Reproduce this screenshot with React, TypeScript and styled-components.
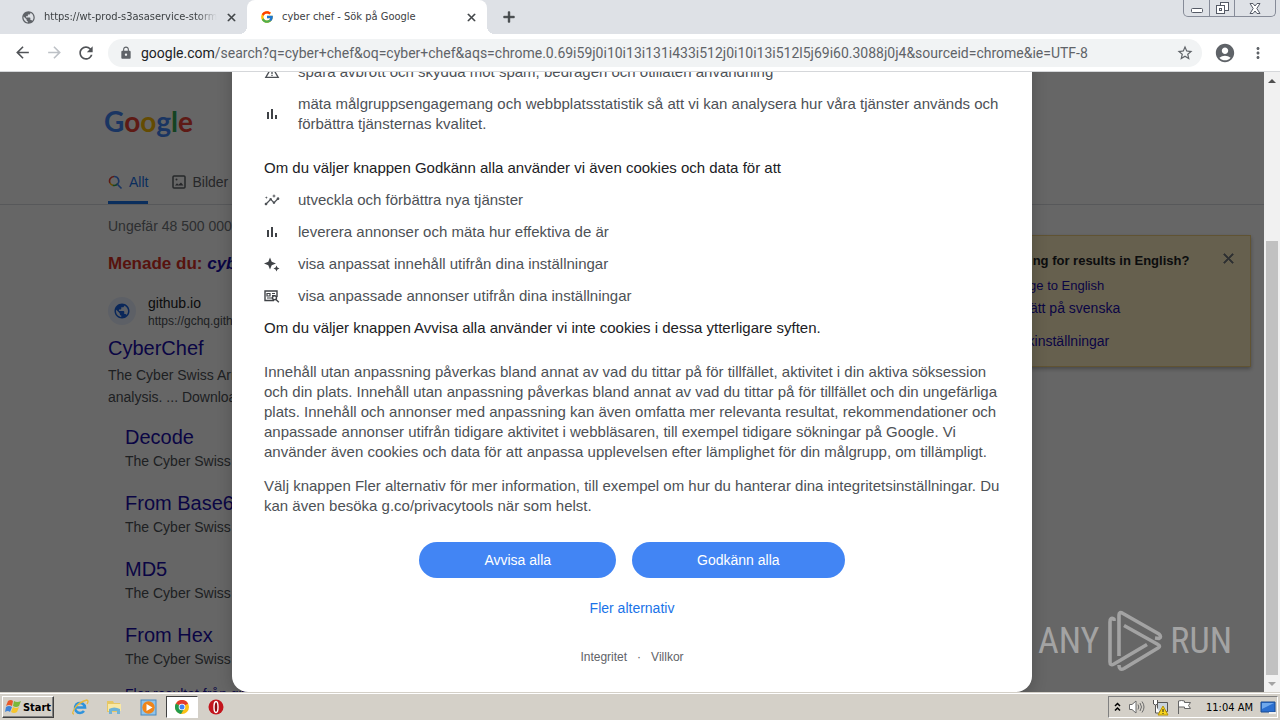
import React from 'react';
import styled, { createGlobalStyle, css } from 'styled-components';
import { FcGoogle } from 'react-icons/fc';
import { MdArrowBack, MdArrowForward, MdRefresh, MdLock, MdStarBorder, MdAccountCircle, MdMoreVert, MdPublic, MdClose, MdAdd, MdWarningAmber, MdInsights } from 'react-icons/md';

const arial = '"Liberation Sans", Arial, sans-serif';
const tahoma = '"DejaVu Sans Condensed", Tahoma, sans-serif';

const Global = createGlobalStyle`
  * { box-sizing: border-box; }
  body { margin: 0; background: #fff; font-family: ${arial}; font-size: 14px; }
  button { font: inherit; border: 0; padding: 0; background: none; color: inherit; display: inline-flex; align-items: center; justify-content: center; }
  a { text-decoration: none; }
  svg { display: block; flex: none; }
`;

const boldIcon = css`
  path:not([fill='none']) { stroke: currentColor; stroke-width: 1; }
`;

const Shell = styled.div`
  display: flex;
  flex-direction: column;
  height: 100vh;
  overflow: hidden;
`;

/* Browser chrome */
const TabStrip = styled.header`
  display: flex;
  height: 34px;
  background: #dee1e6;
  font-family: ${tahoma};
  font-size: 11px;
  color: #3c4043;
`;

const Tab = styled.div<{ $active?: boolean }>`
  position: relative;
  display: flex;
  align-items: center;
  width: ${p => (p.$active ? 240 : 247)}px;
  padding: 0 9px 0 ${p => (p.$active ? 13 : 21)}px;
  gap: 8px;
  ${p => p.$active && css`
    background: #fff;
    border-radius: 8px 8px 0 0;
    &::before, &::after {
      content: '';
      position: absolute;
      bottom: 0;
      width: 8px;
      height: 8px;
    }
    &::before { right: 100%; background: radial-gradient(circle at 0 0, transparent 8px, #fff 8px); }
    &::after { left: 100%; background: radial-gradient(circle at 100% 0, transparent 8px, #fff 8px); }
  `}
`;

const TabTitle = styled.span<{ $fade?: boolean }>`
  flex: 1;
  min-width: 0;
  overflow: hidden;
  white-space: nowrap;
  line-height: 18px;
  ${p => p.$fade && css`mask-image: linear-gradient(to right, #000 88%, transparent);`}
`;

const TabClose = styled.button`
  ${boldIcon}
`;

const NewTab = styled.button`
  width: 44px;
  ${boldIcon}
`;

const WindowButtons = styled.div`
  display: flex;
  margin: 0 4px 0 auto;
  height: 17px;
  border: 1px solid #868b98;
  border-top: 0;
  border-radius: 0 0 5px 5px;
  button + button { border-left: 1px solid #868b98; }
`;

const WindowButton = styled.button<{ $wide?: boolean }>`
  width: ${p => (p.$wide ? 41 : 25)}px;
`;

const Toolbar = styled.div`
  display: flex;
  align-items: center;
  height: 38px;
  padding: 0 12px;
  background: #fff;
  border-bottom: 1px solid #d5d7da;
  color: #5f6368;
`;

const NavButton = styled.button<{ $muted?: boolean }>`
  width: 20px;
  height: 28px;
  margin-right: 12px;
  color: ${p => (p.$muted ? '#bdc1c6' : '#505357')};
`;

const MenuButton = styled.button`
  width: 20px;
  height: 28px;
  margin-left: 12px;
`;

const Omnibox = styled.form`
  display: flex;
  flex: 1;
  min-width: 0;
  align-items: center;
  height: 28px;
  margin-right: 12px;
  padding: 0 8px 0 11px;
  gap: 8px;
  border-radius: 14px;
  background: #f1f3f4;
`;

const Url = styled.div`
  flex: 1;
  min-width: 0;
  overflow: hidden;
  white-space: nowrap;
  font-family: Roboto, ${tahoma};
  font-size: 14px;
  line-height: 20px;
  b { font-weight: 400; color: #202124; }
`;

/* Page area */
const Viewport = styled.main`
  display: flex;
  flex: 1;
  min-height: 0;
`;

const Stage = styled.div`
  position: relative;
  flex: 1;
  min-width: 0;
  overflow: hidden;
`;

const Page = styled.div`
  color: #4d5156;
`;

const PageHeader = styled.div`
  display: flex;
  flex-direction: column;
  height: 133px;
  padding: 28px 0 0 108px;
  border-bottom: 1px solid #dadce0;
`;

const Logo = styled.a`
  margin-left: -4px;
  font-family: Lato, sans-serif;
  font-size: 28px;
  font-weight: 700;
  line-height: 42px;
`;

const Tint = styled.span<{ $c: string }>`
  color: ${p => p.$c};
`;

const PageNav = styled.nav`
  display: flex;
  gap: 24px;
  margin-top: auto;
`;

const PageTab = styled.a<{ $active?: boolean }>`
  display: flex;
  gap: 6px;
  height: 35px;
  padding-bottom: 6px;
  align-items: center;
  border-bottom: 3px solid ${p => (p.$active ? '#1a73e8' : 'transparent')};
  color: ${p => (p.$active ? '#1a73e8' : '#5f6368')};
`;

const Columns = styled.div`
  display: flex;
  justify-content: space-between;
  padding: 0 13px 0 108px;
`;

const Results = styled.div`
  width: 600px;
`;

const Stats = styled.p`
  margin: 0;
  padding-top: 10px;
  line-height: 22px;
  color: #70757a;
`;

const Suggestion = styled.p`
  margin: 16px 0 18px;
  font-size: 17px;
  line-height: 22px;
  font-weight: 700;
  color: #d93025;
  a { color: #1a0dab; font-style: italic; }
`;

const Source = styled.div`
  display: flex;
  align-items: center;
  gap: 12px;
  height: 36px;
`;

const SourceIcon = styled.span`
  display: flex;
  align-items: center;
  justify-content: center;
  width: 28px;
  height: 28px;
  border-radius: 50%;
  background: #e8f0fe;
  color: #1a63e0;
`;

const SourceText = styled.div`
  color: #202124;
  line-height: 20px;
  small { display: block; font-size: 12px; line-height: 16px; color: #4d5156; }
`;

const Title = styled.h3`
  margin: 0;
  font-size: 20px;
  line-height: 26px;
  font-weight: 400;
  a { color: #1a0dab; }
`;

const Snippet = styled.p`
  margin: 0;
  line-height: 22px;
  white-space: nowrap;
`;

const Main = styled.article`
  ${Title} { margin: 6px 0 3px; }
`;

const SubLinks = styled.div`
  padding: 16px 0 0 17px;
`;

const SubLink = styled.div`
  height: 66px;
`;

const More = styled.a`
  display: block;
  color: #1a0dab;
  line-height: 12px;
`;

const Notice = styled.aside`
  position: relative;
  width: 270px;
  height: 132px;
  margin-top: 30px;
  padding: 15px 16px;
  border: 1px solid #f0d080;
  background: #fff0c4;
  box-shadow: 0 2px 4px rgba(0, 0, 0, 0.3);
  color: #202124;
  font-size: 14px;
  strong { display: block; font-size: 13px; line-height: 20px; margin-bottom: 3px; }
  a { display: block; line-height: 23px; color: #1a0dab; white-space: nowrap; }
  a:first-of-type { font-size: 13px; }
  a:last-of-type { margin-top: 10px; }
`;

const Dismiss = styled.button`
  position: absolute;
  top: 14px;
  right: 13px;
  color: #70757a;
  ${boldIcon}
`;

/* Consent dialog */
const Scrim = styled.div`
  position: absolute;
  inset: 0;
  display: flex;
  justify-content: center;
  align-items: flex-end;
  background: rgba(0, 0, 0, 0.6);
`;

const Dialog = styled.section`
  width: 800px;
  max-width: 100%;
  padding: 32px 32px 27px;
  border-radius: 16px;
  background: #fff;
  box-shadow: 0 4px 16px rgba(0, 0, 0, 0.2);
  color: #4d5156;
  font-size: 15px;
  line-height: 20px;
`;

const Lead = styled.p<{ $section?: boolean }>`
  margin: ${p => (p.$section ? 12 : 0)}px 0 0;
  color: #202124;
`;

const Purposes = styled.ul`
  display: flex;
  flex-direction: column;
  gap: 12px;
  margin: 0;
  padding: 12px 0;
  list-style: none;
`;

const Purpose = styled.li`
  display: flex;
  align-items: center;
  gap: 18px;
  color: #4d5156;
`;

const Paragraph = styled.p<{ $first?: boolean }>`
  margin: ${p => (p.$first ? 24 : 14)}px -8px 0 0;
`;

const Actions = styled.div`
  display: flex;
  justify-content: center;
  gap: 16px;
  margin: 26px 0 20px;
`;

const Choice = styled.button`
  height: 36px;
  padding: 0 65px;
  border-radius: 18px;
  background: #4285f4;
  color: #fff;
  font-size: 14px;
`;

const Centered = styled.div`
  display: flex;
  justify-content: center;
  font-size: 14px;
  a { color: #1a73e8; }
`;

const Legal = styled.footer`
  display: flex;
  justify-content: center;
  gap: 10px;
  margin-top: 31px;
  font-size: 12px;
  line-height: 16px;
  color: #5f6368;
  a { color: inherit; }
`;

const Watermark = styled.div`
  position: absolute;
  right: 32px;
  bottom: 20px;
  display: flex;
  align-items: center;
  gap: 7px;
  font-family: "Liberation Sans Narrow", "Roboto Condensed", Roboto, sans-serif;
  font-size: 36px;
  line-height: 62px;
  color: #a3a3a3;
`;

/* Scrollbar */
const ScrollBar = styled.div`
  display: flex;
  flex-direction: column;
  width: 16px;
  background: #f1f1f1;
`;

const ScrollArrow = styled.button`
  height: 17px;
`;

const Track = styled.div`
  display: flex;
  flex: 1;
  flex-direction: column;
  justify-content: flex-end;
  padding: 0 2px;
`;

const Thumb = styled.div`
  height: 74%;
  background: #c1c1c1;
`;

/* Taskbar */
const TaskBar = styled.footer`
  display: flex;
  align-items: center;
  height: 28px;
  padding: 0 2px;
  border-top: 1px solid #d4d0c8;
  box-shadow: inset 0 1px #fff;
  background: #d4d0c8;
  font-family: ${tahoma};
  font-size: 11px;
  color: #000;
`;

const StartButton = styled.button`
  width: 52px;
  height: 22px;
  margin: 1px 10px 0 0;
  gap: 1px;
  border: 1px solid;
  border-color: #fff #404040 #404040 #fff;
  box-shadow: inset -1px -1px #808080;
  font-weight: 700;
`;

const TaskButton = styled.button<{ $pressed?: boolean }>`
  width: 32px;
  height: 22px;
  margin: 1px 2px 0 0;
  ${p => p.$pressed && css`
    background: #fff;
    border: 1px solid;
    border-color: #404040 #fff #fff #404040;
  `}
`;

const Tray = styled.div`
  display: flex;
  align-items: center;
  height: 22px;
  margin: 1px 0 0 auto;
  padding: 0 1px 0 5px;
  gap: 7px;
  border: 1px solid;
  border-color: #808080 #fff #fff #808080;
`;

const Clock = styled.time`
  margin: 0 0 0 6px;
`;

const BarsIcon = () => (
  <svg width="16" height="16" viewBox="0 0 16 16" fill="#3f4246">
    <path d="M3 6h2v7H3zM7 3h2v10H7zM11 9h2v4h-2z" />
  </svg>
);

const SparkIcon = () => (
  <svg width="16" height="16" viewBox="0 0 16 16" fill="#3f4246">
    <path d="M6 1.500 7.700 5.800 12 7.500 7.700 9.200 6 13.500 4.300 9.200 0 7.500 4.300 5.800zM12.500 9.500l.9 2.100 2.100.9-2.100.9-.9 2.100-.9-2.100-2.100-.9 2.100-.9z" />
  </svg>
);

const AdIcon = () => (
  <svg width="16" height="16" viewBox="0 0 16 16" fill="none" stroke="#3f4246" strokeWidth="1.400">
    <path d="M10 12.500H1V3h12v6" />
    <path d="M3 5.500h3v2.500H3zM8 5.500h3M8 7.500h3M3 10h5" strokeWidth="1.200" />
    <circle cx="10.500" cy="9.800" r="2" />
    <path d="m12 11.500 2.800 2.800" />
  </svg>
);

const SearchIcon = () => (
  <svg width="15" height="15" viewBox="0 0 15 15" fill="none" strokeWidth="1.600">
    <path d="M6 1.500A4.500 4.500 0 0 0 2 8" stroke="#ea4335" />
    <path d="M2 8a4.500 4.500 0 0 0 3 2.400" stroke="#fbbc04" />
    <path d="M5 10.400A4.500 4.500 0 0 0 9.800 8.500" stroke="#34a853" />
    <path d="M6 1.500A4.500 4.500 0 0 1 9.400 9.200L13.500 13.500" stroke="#4285f4" />
  </svg>
);

const ImageIcon = () => (
  <svg width="14" height="14" viewBox="0 0 14 14" fill="none" stroke="#5f6368" strokeWidth="1.500">
    <rect x="1" y="1" width="12" height="12" rx="1" />
    <path d="m3 10.500 2-2.300 1.500 1.500L9 7.500l2.500 3z" fill="#5f6368" stroke="none" />
    <circle cx="4.500" cy="4.500" r="1" fill="#5f6368" stroke="none" />
  </svg>
);

const PlayMark = () => (
  <svg width="57" height="62" viewBox="0 0 57 62" fill="none" stroke="#a3a3a3" strokeWidth="3.600" strokeLinejoin="round">
    <path d="M8 11V9Q4 7 4 12V52Q4 56 8 54L41 34.500" />
    <path d="M13 46V5Q13 1 17 3.500L53 24Q56 27 53 28.500L49 28" />
    <path d="M18 15.500L52 34.500Q55 36 52 38L18 58.500Q13 61 13 55" />
  </svg>
);

const WindowsFlag = () => (
  <svg width="17" height="16" viewBox="0 0 17 16">
    <path d="M3 2q3-2 5 0L7 7Q4 5 1 7z" fill="#e8592a" />
    <path d="M9 2q3 2 7 0l-2 5q-3 2-6 0z" fill="#7ab83a" />
    <path d="M1 8q3-2 6 0l-2 5Q3 11 0 13z" fill="#3f83d8" />
    <path d="M8 8q3 2 6 0l-2 5q-3 2-6 0z" fill="#f6c52c" />
  </svg>
);

const ExplorerE = () => (
  <svg width="18" height="18" viewBox="0 0 18 18" fill="none">
    <path d="M4.500 9.500h9.500A5 5 0 1 0 13 13" stroke="#2f93dc" strokeWidth="2.600" />
    <path d="M3 16Q0 16 4 10T16 2q2 1 0 4" stroke="#e7b93c" strokeWidth="1.300" />
  </svg>
);

const FolderIcon = () => (
  <svg width="18" height="18" viewBox="0 0 18 18">
    <path d="M2 3h6l1 2h6v9H2z" fill="#e6c765" />
    <path d="M3 6h13v7H3z" fill="#f9e8a4" />
    <path d="M4 16v-5q5-3 11 0v5h-3v-3H7v3z" fill="#6fb3d6" />
  </svg>
);

const MediaIcon = () => (
  <svg width="17" height="17" viewBox="0 0 17 17">
    <rect x="1" y="1" width="15" height="15" fill="#8fc3ea" stroke="#4988bd" />
    <circle cx="8.500" cy="8.500" r="6.200" fill="#f08519" />
    <path d="m6.500 5 6 3.500-6 3.500z" fill="#fff" />
  </svg>
);

const ChromeIcon = () => (
  <svg width="14" height="14" viewBox="0 0 14 14">
    <circle cx="7" cy="7" r="7" fill="#fbc116" />
    <path d="M7 7 .9 3.500A7 7 0 0 1 13.100 3.500z" fill="#e33b2e" />
    <path d="M7 7 .9 3.500A7 7 0 0 0 6 14l3-5z" fill="#229b4d" />
    <circle cx="7" cy="7" r="3.300" fill="#fff" />
    <circle cx="7" cy="7" r="2.500" fill="#4384f3" />
  </svg>
);

const OperaIcon = () => (
  <svg width="16" height="16" viewBox="0 0 16 16">
    <circle cx="8" cy="8" r="7.500" fill="#c3141c" />
    <ellipse cx="8" cy="8" rx="2" ry="5.500" fill="#8c0a10" stroke="#fff" strokeWidth="1.400" />
  </svg>
);

const SpeakerIcon = () => (
  <svg width="17" height="16" viewBox="0 0 17 16" fill="none" stroke="#6b6b6b">
    <path d="M1.500 5.500H4L8 2v12l-4-3.500H1.500z" fill="#fff" />
    <path d="M10 5.500q1.500 2.500 0 5M12 4q3 4 0 8M14 2.500q4 5.500 0 11" />
  </svg>
);

const NetworkIcon = () => (
  <svg width="17" height="17" viewBox="0 0 17 17" fill="none" stroke="#555">
    <path d="M5.500 3.500h10v9h-10z" fill="#c9d3dc" />
    <path d="M1.500 1v4q2 2 4 0V1M3.500 6v8H8" fill="#fff" />
    <path d="m11 7 5 9H6z" fill="#f8d51d" stroke="#b69205" />
    <path d="M11 10v3M11 14v1" stroke="#222" />
  </svg>
);

const FlagIcon = () => (
  <svg width="17" height="16" viewBox="0 0 17 16" fill="#fff" stroke="#666">
    <path d="M2.500 15V2q3-1 6 0v1.500h6l-2 3 2 3h-6V8h-6" />
  </svg>
);

const DesktopIcon = () => (
  <svg width="16" height="15" viewBox="0 0 16 15">
    <path d="M1 2h14v10H1z" fill="#2b6fd0" stroke="#194a91" />
    <path d="M2 3h12L2 9z" fill="#6fa8ec" />
    <path d="M9 13h7" stroke="#eee" strokeWidth="2" />
  </svg>
);

const subLinks = ['Decode', 'From Base64', 'MD5', 'From Hex'];

export default function App() {
  return (
    <Shell>
      <Global />
      <TabStrip>
        <Tab>
          <MdPublic size={15} color="#5f6368" />
          <TabTitle $fade>https://wt-prod-s3asaservice-storm</TabTitle>
          <TabClose aria-label="Stäng flik"><MdClose size={13} /></TabClose>
        </Tab>
        <Tab $active>
          <FcGoogle size={14} />
          <TabTitle>cyber chef - Sök på Google</TabTitle>
          <TabClose aria-label="Stäng flik"><MdClose size={13} /></TabClose>
        </Tab>
        <NewTab aria-label="Ny flik"><MdAdd size={18} /></NewTab>
        <WindowButtons>
          <WindowButton aria-label="Minimera">
            <svg width="12" height="14" viewBox="0 0 12 14"><rect x=".5" y="7.500" width="11" height="4" rx="1" fill="#fff" stroke="#555a66" /></svg>
          </WindowButton>
          <WindowButton aria-label="Återställ">
            <svg width="13" height="13" viewBox="0 0 13 13" fill="#fff" stroke="#555a66">
              <rect x="4.500" y=".5" width="8" height="8" />
              <rect x=".5" y="3.500" width="8" height="8" />
              <rect x="3.500" y="6.500" width="2" height="2" />
            </svg>
          </WindowButton>
          <WindowButton $wide aria-label="Stäng">
            <svg width="12" height="11" viewBox="0 0 12 11" fill="#fff" stroke="#555a66">
              <path d="M1 .5h3l2 2.500 2-2.500h3L7.800 5.500 11 10.500H8L6 8l-2 2.500H1l3.200-5z" />
            </svg>
          </WindowButton>
        </WindowButtons>
      </TabStrip>
      <Toolbar>
        <NavButton aria-label="Tillbaka"><MdArrowBack size={19} /></NavButton>
        <NavButton aria-label="Framåt" $muted><MdArrowForward size={19} /></NavButton>
        <NavButton aria-label="Läs in igen"><MdRefresh size={20} /></NavButton>
        <Omnibox>
          <MdLock size={14} />
          <Url><b>google.com</b>/search?q=cyber+chef&amp;oq=cyber+chef&amp;aqs=chrome.0.69i59j0i10i13i131i433i512j0i10i13i512l5j69i60.3088j0j4&amp;sourceid=chrome&amp;ie=UTF-8</Url>
          <MdStarBorder size={18} />
        </Omnibox>
        <MdAccountCircle size={22} />
        <MenuButton aria-label="Meny"><MdMoreVert size={18} /></MenuButton>
      </Toolbar>
      <Viewport>
        <Stage>
          <Page>
            <PageHeader>
              <Logo href="#"><Tint $c="#4285f4">G</Tint><Tint $c="#ea4335">o</Tint><Tint $c="#fbbc05">o</Tint><Tint $c="#4285f4">g</Tint><Tint $c="#34a853">l</Tint><Tint $c="#ea4335">e</Tint></Logo>
              <PageNav>
                <PageTab href="#" $active><SearchIcon />Allt</PageTab>
                <PageTab href="#"><ImageIcon />Bilder</PageTab>
              </PageNav>
            </PageHeader>
            <Columns>
              <Results>
                <Stats>Ungefär 48 500 000</Stats>
                <Suggestion>Menade du: <a href="#">cyber</a></Suggestion>
                <Main>
                  <Source>
                    <SourceIcon><MdPublic size={18} /></SourceIcon>
                    <SourceText>github.io<small>https://gchq.github.io</small></SourceText>
                  </Source>
                  <Title><a href="#">CyberChef</a></Title>
                  <Snippet>The Cyber Swiss Army<br />analysis. ... Download</Snippet>
                </Main>
                <SubLinks>
                  {subLinks.map(name => (
                    <SubLink key={name}>
                      <Title><a href="#">{name}</a></Title>
                      <Snippet>The Cyber Swiss</Snippet>
                    </SubLink>
                  ))}
                  <More href="#">Fler resultat från github.io</More>
                </SubLinks>
              </Results>
              <Notice>
                <strong>Looking for results in English?</strong>
                <a href="#">Change to English</a>
                <a href="#">Fortsätt på svenska</a>
                <a href="#">Språkinställningar</a>
                <Dismiss aria-label="Stäng"><MdClose size={17} /></Dismiss>
              </Notice>
            </Columns>
          </Page>
          <Scrim>
            <Dialog role="dialog" aria-label="Innan du fortsätter">
              <Purposes>
                <Purpose><MdWarningAmber size={16} />spåra avbrott och skydda mot spam, bedrägeri och otillåten användning</Purpose>
                <Purpose><BarsIcon /><span>mäta målgruppsengagemang och webbplatsstatistik så att vi kan analysera hur våra tjänster används och förbättra tjänsternas kvalitet.</span></Purpose>
              </Purposes>
              <Lead $section>Om du väljer knappen Godkänn alla använder vi även cookies och data för att</Lead>
              <Purposes>
                <Purpose><MdInsights size={16} />utveckla och förbättra nya tjänster</Purpose>
                <Purpose><BarsIcon />leverera annonser och mäta hur effektiva de är</Purpose>
                <Purpose><SparkIcon />visa anpassat innehåll utifrån dina inställningar</Purpose>
                <Purpose><AdIcon />visa anpassade annonser utifrån dina inställningar</Purpose>
              </Purposes>
              <Lead>Om du väljer knappen Avvisa alla använder vi inte cookies i dessa ytterligare syften.</Lead>
              <Paragraph $first>Innehåll utan anpassning påverkas bland annat av vad du tittar på för tillfället, aktivitet i din aktiva söksession och din plats. Innehåll utan anpassning påverkas bland annat av vad du tittar på för tillfället och din ungefärliga plats. Innehåll och annonser med anpassning kan även omfatta mer relevanta resultat, rekommendationer och anpassade annonser utifrån tidigare aktivitet i webbläsaren, till exempel tidigare sökningar på Google. Vi använder även cookies och data för att anpassa upplevelsen efter lämplighet för din målgrupp, om tillämpligt.</Paragraph>
              <Paragraph>Välj knappen Fler alternativ för mer information, till exempel om hur du hanterar dina integritetsinställningar. Du kan även besöka g.co/privacytools när som helst.</Paragraph>
              <Actions>
                <Choice>Avvisa alla</Choice>
                <Choice>Godkänn alla</Choice>
              </Actions>
              <Centered><a href="#">Fler alternativ</a></Centered>
              <Legal><a href="#">Integritet</a><span>·</span><a href="#">Villkor</a></Legal>
            </Dialog>
          </Scrim>
          <Watermark><span>ANY</span><PlayMark /><span>RUN</span></Watermark>
        </Stage>
        <ScrollBar>
          <ScrollArrow aria-label="Rulla upp"><svg width="8" height="4" viewBox="0 0 8 4"><path d="M0 4 4 0l4 4z" fill="#505050" /></svg></ScrollArrow>
          <Track><Thumb /></Track>
          <ScrollArrow aria-label="Rulla ned"><svg width="8" height="4" viewBox="0 0 8 4"><path d="M0 0h8L4 4z" fill="#a3a3a3" /></svg></ScrollArrow>
        </ScrollBar>
      </Viewport>
      <TaskBar>
        <StartButton><WindowsFlag />Start</StartButton>
        <TaskButton aria-label="Internet Explorer"><ExplorerE /></TaskButton>
        <TaskButton aria-label="Utforskaren"><FolderIcon /></TaskButton>
        <TaskButton aria-label="Media Player"><MediaIcon /></TaskButton>
        <TaskButton aria-label="Chrome" $pressed><ChromeIcon /></TaskButton>
        <TaskButton aria-label="Opera"><OperaIcon /></TaskButton>
        <Tray>
          <svg width="7" height="10" viewBox="0 0 7 10" fill="none" stroke="#000" strokeWidth="1.500"><path d="m1 4 2.500-2.500L6 4M1 8.500 3.500 6 6 8.500" /></svg>
          <SpeakerIcon />
          <NetworkIcon />
          <FlagIcon />
          <Clock>11:04 AM</Clock>
          <DesktopIcon />
        </Tray>
      </TaskBar>
    </Shell>
  );
}
